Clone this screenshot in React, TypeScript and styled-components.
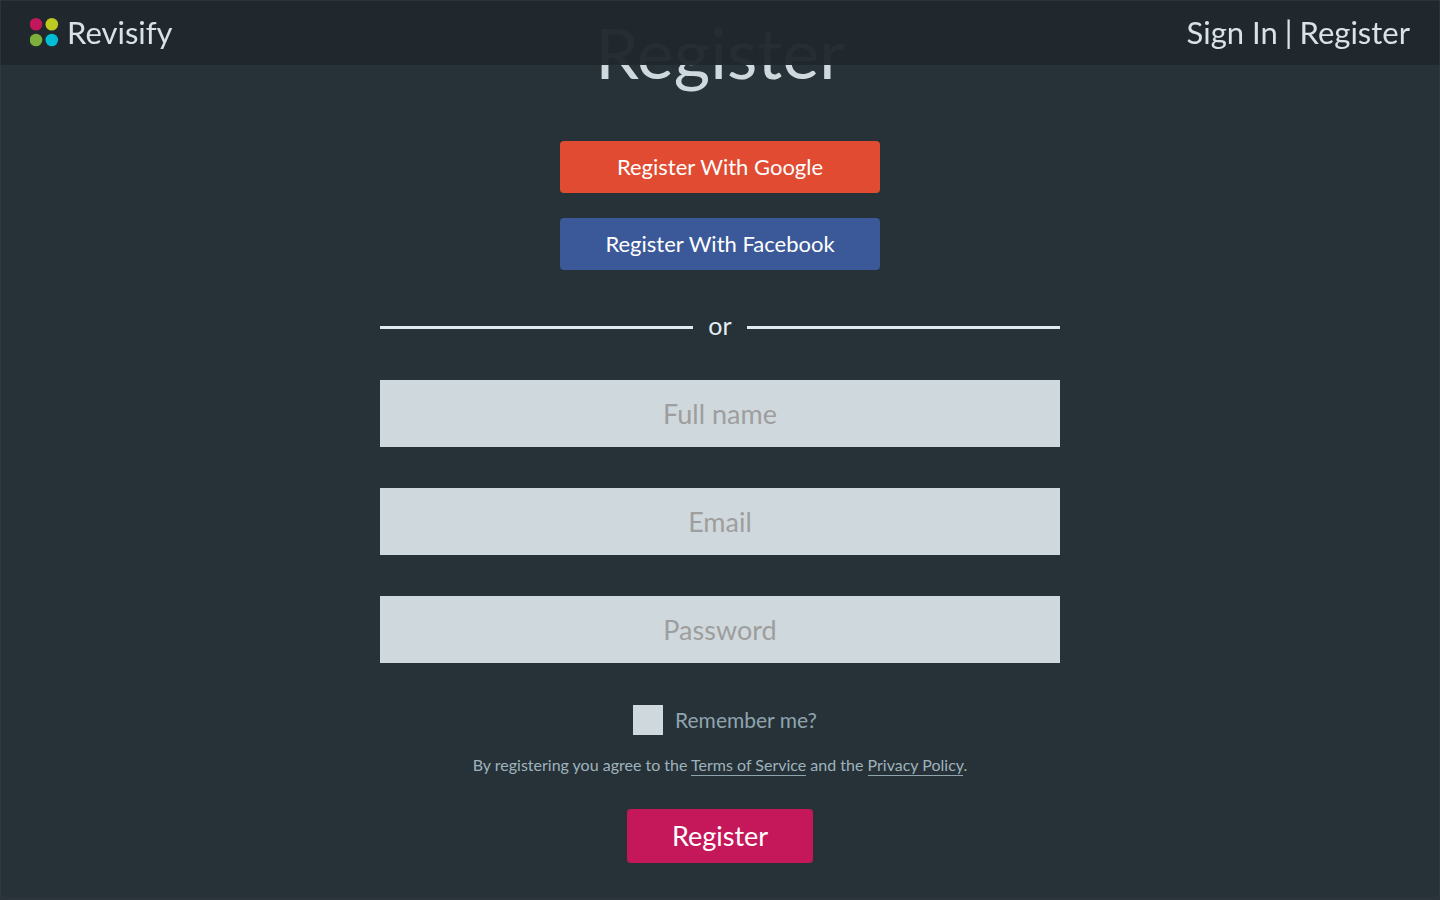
import React from "react";
import styled, { createGlobalStyle } from "styled-components";

const GlobalStyle = createGlobalStyle`
  *, *::before, *::after { box-sizing: border-box; }
  body {
    margin: 0;
    background: #263238;
    color: #cfd8dc;
    font-family: Lato, "Open Sans", sans-serif;
  }
  button, input { font: inherit; }
`;

const Page = styled.div`
  min-height: 100vh;
  padding-bottom: 34px;
  border: 1px solid #2e3a40;
  border-bottom: 3px solid #2b343b;
`;

const Header = styled.header`
  position: fixed;
  inset: 0 0 auto;
  z-index: 1;
  display: flex;
  align-items: center;
  justify-content: space-between;
  height: 65px;
  padding: 0 29px 2px;
  border: 1px solid #2a343a;
  border-bottom: 0;
  background: rgba(32, 39, 45, 0.97);
  background-clip: padding-box;
  font-size: 31px;
  line-height: 40px;
  color: #d9e2e8;
`;

const Brand = styled.a`
  display: flex;
  align-items: center;
  gap: 8px;
  color: inherit;
  text-decoration: none;
`;

const AccountNav = styled.nav`
  display: flex;
  gap: 7px;
`;

const NavLink = styled.a`
  color: inherit;
  text-decoration: none;
`;

const Main = styled.main`
  display: flex;
  flex-direction: column;
  align-items: center;
  width: 100%;
  max-width: 680px;
  margin: 0 auto;
  padding-top: 9px;
`;

const Title = styled.h1`
  margin: 0 0 47px;
  font-size: 70px;
  font-weight: 400;
  line-height: 84px;
`;

const SocialButtons = styled.div`
  display: flex;
  flex-direction: column;
  gap: 25px;
  width: 320px;
`;

const Button = styled.button<{ $color: string }>`
  height: 52px;
  padding: 0 0 2px;
  border: 0;
  border-radius: 4px;
  background: ${(p) => p.$color};
  color: #fff;
  font-size: 22px;
  cursor: pointer;
`;

const Submit = styled(Button)`
  width: 186px;
  height: 54px;
  font-size: 27px;
`;

const Divider = styled.div`
  display: flex;
  align-items: center;
  gap: 15px;
  width: 100%;
  margin: 42px 0 38px;
  font-size: 25px;
  line-height: 26px;
  color: #e3edf2;

  &::before,
  &::after {
    content: "";
    flex: 1;
    height: 3px;
    background: #dfe9ee;
  }
`;

const DividerText = styled.span`
  padding-bottom: 4px;
`;

const Form = styled.form`
  display: flex;
  flex-direction: column;
  align-items: center;
  width: 100%;
`;

const Fields = styled.div`
  display: flex;
  flex-direction: column;
  gap: 41px;
  width: 100%;
`;

const Field = styled.input`
  width: 100%;
  height: 67px;
  padding: 0 20px;
  border: 0;
  border-radius: 0;
  background: #cfd8dc;
  color: #263238;
  font-size: 27px;
  text-align: center;

  &::placeholder { color: #9e9e9e; opacity: 1; }
`;

const Remember = styled.label`
  display: flex;
  align-items: center;
  gap: 12px;
  margin-top: 42px;
  margin-left: 10px;
  font-size: 21px;
  color: #90a4ae;
`;

const RememberText = styled.span`
  padding-bottom: 2px;
`;

const Checkbox = styled.input`
  appearance: none;
  width: 30px;
  height: 30px;
  margin: 0;
  background: #cfd8dc;

  &:checked { box-shadow: inset 0 0 0 8px #cfd8dc; background: #c2185b; }
`;

const Terms = styled.p`
  margin: 19px 0 34px;
  font-size: 16px;
  line-height: 21px;
  color: #9fb2bc;
`;

const TermsLink = styled.a`
  padding-bottom: 1px;
  border-bottom: 1px solid #90a4ae;
  color: inherit;
  text-decoration: none;
`;

const Logo = () => (
  <svg width="29" height="29" viewBox="0 0 29 29" aria-hidden="true">
    <circle cx="6" cy="6.3" r="6.3" fill="#c2185b" />
    <circle cx="21.8" cy="6.3" r="6.3" fill="#bdca1e" />
    <circle cx="6" cy="22" r="6.3" fill="#7cb03a" />
    <circle cx="21.8" cy="22" r="6.3" fill="#00bcd4" />
  </svg>
);

const fields = [
  { name: "name", type: "text", label: "Full name" },
  { name: "email", type: "email", label: "Email" },
  { name: "password", type: "password", label: "Password" },
];

export default function App() {
  return (
    <Page>
      <GlobalStyle />
      <Header>
        <Brand href="#home">
          <Logo />
          Revisify
        </Brand>
        <AccountNav>
          <NavLink href="#signin">Sign In</NavLink>
          <span>|</span>
          <NavLink href="#register">Register</NavLink>
        </AccountNav>
      </Header>
      <Main>
        <Title>Register</Title>
        <SocialButtons>
          <Button type="button" $color="#e04b32">Register With Google</Button>
          <Button type="button" $color="#3b5998">Register With Facebook</Button>
        </SocialButtons>
        <Divider>
          <DividerText>or</DividerText>
        </Divider>
        <Form onSubmit={(e) => e.preventDefault()}>
          <Fields>
            {fields.map((f) => (
              <Field key={f.name} name={f.name} type={f.type} placeholder={f.label} aria-label={f.label} />
            ))}
          </Fields>
          <Remember>
            <Checkbox type="checkbox" name="remember" />
            <RememberText>Remember me?</RememberText>
          </Remember>
          <Terms>
            By registering you agree to the <TermsLink href="#terms">Terms of Service</TermsLink> and the{" "}
            <TermsLink href="#privacy">Privacy Policy</TermsLink>.
          </Terms>
          <Submit type="submit" $color="#c5185b">Register</Submit>
        </Form>
      </Main>
    </Page>
  );
}
